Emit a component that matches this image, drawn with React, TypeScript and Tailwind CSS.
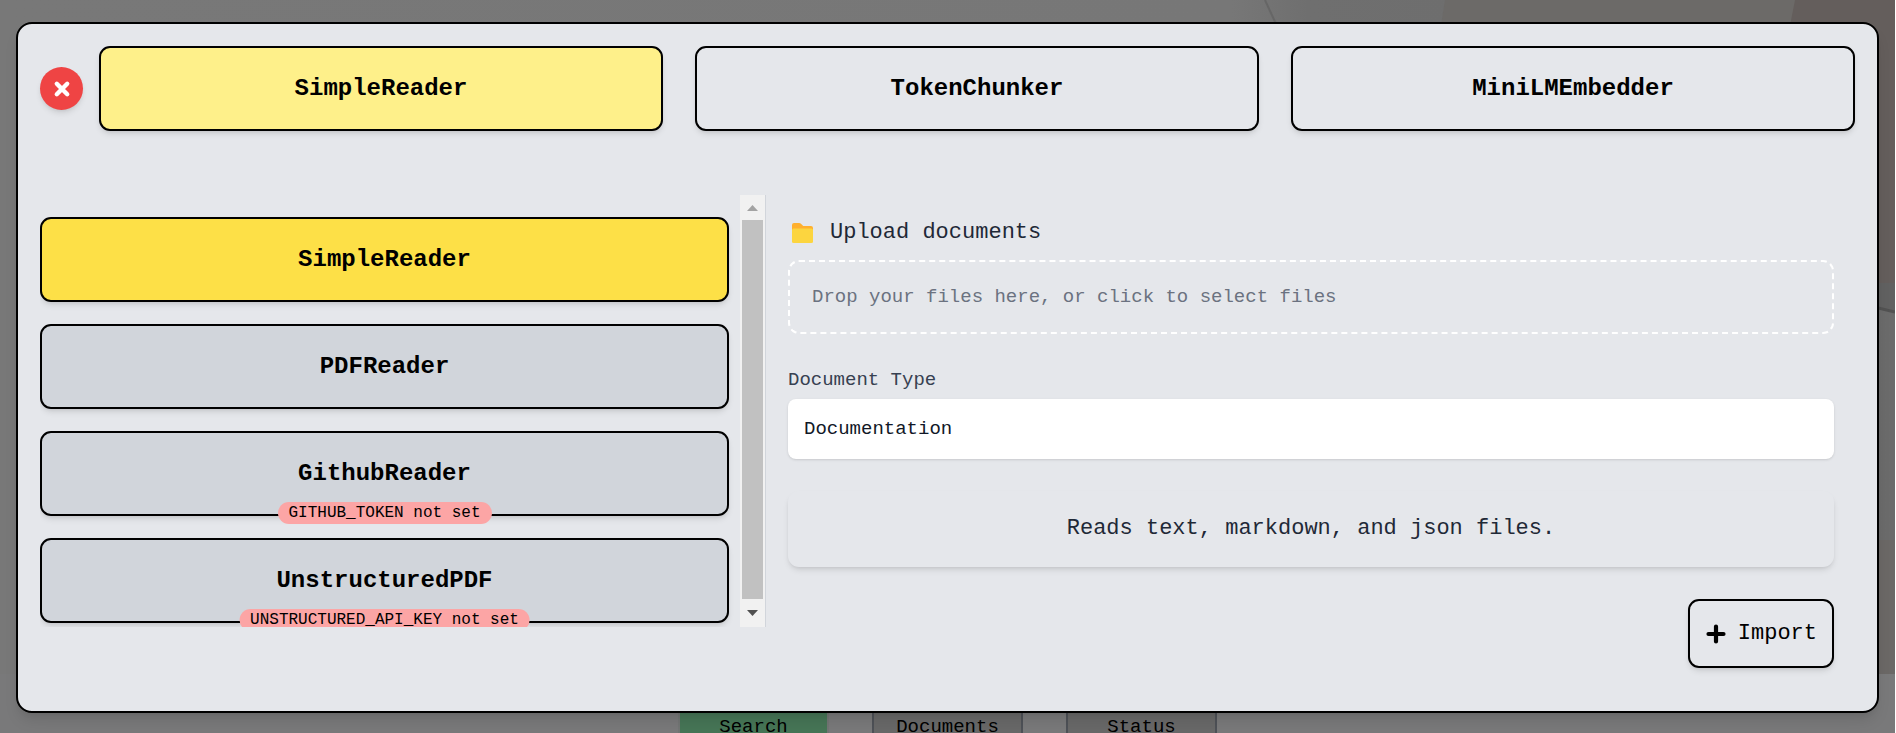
import React from "react";

const tabs = [
  { name: "SimpleReader", active: true },
  { name: "TokenChunker", active: false },
  { name: "MiniLMEmbedder", active: false },
];

const readers = [
  { name: "SimpleReader", active: true, missing: "" },
  { name: "PDFReader", active: false, missing: "" },
  { name: "GithubReader", active: false, missing: "GITHUB_TOKEN" },
  { name: "UnstructuredPDF", active: false, missing: "UNSTRUCTURED_API_KEY" },
];

const cardBase =
  "relative flex h-[85px] w-full shrink-0 items-center justify-center rounded-[11px] border-2 border-black text-[24px] leading-8 font-bold text-black shadow-md";

const pageButton = "h-7 w-[151px] border-x-2 text-[19px] leading-7 text-black";

function Backdrop() {
  return (
    <svg
      className="absolute inset-0 h-full w-full"
      viewBox="0 0 1895 733"
      preserveAspectRatio="none"
      aria-hidden="true"
    >
      <defs>
        <linearGradient id="wall" x1="0" x2="1" y1="0" y2="0">
          <stop offset="0" stopColor="#787878" />
          <stop offset="0.65" stopColor="#777777" />
          <stop offset="0.69" stopColor="#6f6f6f" />
          <stop offset="1" stopColor="#6b6b6b" />
        </linearGradient>
      </defs>
      <rect width="1895" height="733" fill="#79797a" />
      <rect width="1895" height="674" fill="url(#wall)" />
      <path d="M1445 0H1895V283H1400Z" fill="#6c6a68" />
      <path d="M1795 0H1895V283H1740Z" fill="#645e5c" />
      <path d="M1740 283H1895V312L1740 270Z" fill="#616161" />
      <path d="M1870 540H1895V674H1870Z" fill="#6b6866" />
      <path d="M1265 0L1276 24" stroke="#666666" strokeWidth="2" />
      <path d="M1870 306L1895 312" stroke="#525252" strokeWidth="3" />
    </svg>
  );
}

function CloseIcon() {
  return (
    <svg className="h-[22px] w-[22px]" viewBox="0 0 22 22" aria-hidden="true">
      <path
        d="M5.800 5.800L16.200 16.200M16.200 5.800L5.800 16.200"
        stroke="currentColor"
        strokeWidth="4.400"
        strokeLinecap="round"
      />
    </svg>
  );
}

function PlusIcon() {
  return (
    <svg className="h-[22px] w-[22px]" viewBox="0 0 22 22" aria-hidden="true">
      <path
        d="M11 3.500V18.500M3.500 11H18.500"
        stroke="currentColor"
        strokeWidth="4.200"
        strokeLinecap="round"
      />
    </svg>
  );
}

function Folder() {
  return (
    <svg className="h-7 w-7" viewBox="0 0 28 28" aria-hidden="true">
      <path d="M4 6a2 2 0 0 1 2-2h5c1 0 1.600.3 2.200.9L15.200 7H23a2 2 0 0 1 2 2v5H4Z" fill="#ffb02e" />
      <rect x="4" y="9.500" width="21" height="14.500" rx="1.500" fill="#fcd53f" />
    </svg>
  );
}

export default function App() {
  return (
    <div className="bg-white pr-px font-['Liberation_Mono',monospace]">
      <div className="relative flex h-screen flex-col overflow-hidden bg-[#79797a] px-4 pt-[22px]">
        <Backdrop />

        <section
          role="dialog"
          aria-label="Import documents"
          className="relative z-10 flex shrink-0 flex-col rounded-2xl border-2 border-black bg-[#e5e7eb] px-[22px] pt-[22px] pb-[43px] shadow-lg"
        >
          <header className="flex items-center gap-4">
            <button
              type="button"
              aria-label="Close"
              className="flex h-[43px] w-[43px] shrink-0 items-center justify-center rounded-full bg-[#ef4444] text-white shadow-md"
            >
              <CloseIcon />
            </button>
            <nav className="flex flex-1 gap-8">
              {tabs.map((tab) => (
                <button
                  key={tab.name}
                  type="button"
                  className={`${cardBase} min-w-0 flex-1 ${tab.active ? "bg-[#fef08a]" : "bg-[#e5e7eb]"}`}
                >
                  {tab.name}
                </button>
              ))}
            </nav>
          </header>

          <div className="mt-16 flex items-start">
            <div className="flex h-[432px] w-2/5 shrink-0 border-r border-[#d1d5db]">
              <div className="flex min-w-0 flex-1 flex-col gap-[22px] overflow-hidden pt-[22px] pr-[11px]">
                {readers.map((reader) => (
                  <button
                    key={reader.name}
                    type="button"
                    className={`${cardBase} ${reader.active ? "bg-[#fde047]" : "bg-[#d1d5db]"}`}
                  >
                    {reader.name}
                    {reader.missing && (
                      <span className="absolute -bottom-[10px] left-1/2 -translate-x-1/2 rounded-full bg-[#fca5a5] px-[11px] text-[16px] leading-[22px] font-normal whitespace-nowrap">
                        {reader.missing} not set
                      </span>
                    )}
                  </button>
                ))}
              </div>
              <div className="flex w-[25px] flex-col items-center bg-[#f1f1f1]" aria-hidden="true">
                <div className="flex h-[25px] items-center">
                  <svg className="h-[6px] w-[11px]" viewBox="0 0 11 6">
                    <path d="M0 6L5.500 0L11 6Z" fill="#a3a3a3" />
                  </svg>
                </div>
                <div className="w-[21px] flex-1 bg-[#c1c1c1]" />
                <div className="flex h-7 items-center">
                  <svg className="h-[6px] w-[11px]" viewBox="0 0 11 6">
                    <path d="M0 0L5.500 6L11 0Z" fill="#505050" />
                  </svg>
                </div>
              </div>
            </div>

            <form className="flex min-w-0 flex-1 flex-col pt-[22px] pr-[21px] pl-[22px]">
              <label htmlFor="files" className="flex h-8 items-center gap-[14px] text-[22px] leading-8 text-[#1f2937]">
                <Folder />
                Upload documents
              </label>
              <button
                id="files"
                type="button"
                className="mt-[11px] flex h-[74px] items-center rounded-[11px] border-2 border-dashed border-white px-[22px] text-left text-[19px] leading-7 text-[#6b7280]"
              >
                Drop your files here, or click to select files
              </button>

              <label htmlFor="document-type" className="mt-8 text-[19px] leading-7 text-[#374151]">
                Document Type
              </label>
              <input
                id="document-type"
                type="text"
                defaultValue="Documentation"
                className="mt-[5px] h-[60px] w-full rounded-lg bg-white px-4 text-[19px] leading-7 text-[#111827] shadow-sm outline-none"
              />

              <p className="mt-8 flex h-[76px] items-center justify-center rounded-[11px] bg-[#e5e7eb] text-[22px] leading-8 text-[#1f2937] shadow-md">
                Reads text, markdown, and json files.
              </p>

              <button
                type="button"
                className="mt-8 flex h-[69px] items-center gap-[11px] self-end rounded-[11px] border-2 border-black bg-[#e5e7eb] px-[15px] text-[22px] leading-8 text-black shadow-md"
              >
                <PlusIcon />
                Import
              </button>
            </form>
          </div>
        </section>

        <nav className="relative flex shrink-0 justify-center gap-[43px]">
          <button type="button" className={`${pageButton} border-[#727574] bg-[#467556]`}>
            Search
          </button>
          <button type="button" className={`${pageButton} border-[#4e5157] bg-[#686868]`}>
            Documents
          </button>
          <button type="button" className={`${pageButton} border-[#4e5157] bg-[#686868]`}>
            Status
          </button>
        </nav>
      </div>
    </div>
  );
}
